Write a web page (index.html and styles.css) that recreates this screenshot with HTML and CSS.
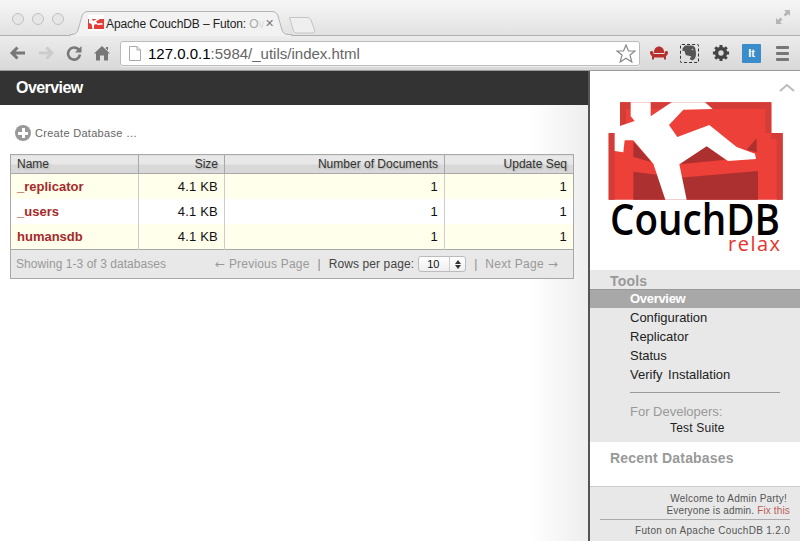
FILE: index.html
```html
<!DOCTYPE html>
<html lang="en">
<head>
<meta charset="utf-8">
<title>Apache CouchDB - Futon: Overview</title>
<link rel="stylesheet" href="styles.css">
</head>
<body>
<header class="chrome">
  <div class="tabbar">
    <div class="lights"><i></i><i></i><i></i></div>
    <div class="tab">
      <svg class="tab-shape" width="222" height="25" viewBox="0 0 222 25"><path d="M0 23.500H2C5 23.500 7 22 8 19L12 5C13 2 15 .5 18 .5H202C205 .5 207 2 208 5L212 19C213 22 215 23.500 218 23.500H222V25H0Z" fill="#f2f2f2" stroke="#b4b4b4"/><path d="M1 24.500H221" stroke="#f2f2f2"/></svg>
      <svg class="favicon" width="16" height="16" viewBox="0 0 16 16"><rect width="16" height="16" fill="#fff"/><path d="M0 4H16V14H0Z" fill="#e23d36"/><path d="M1 4H4L5 6L9 4H12L8 6.500L9.500 8.500L14 8L15 9.500L10 10L8 9L6 10V14H4.500L3.500 9L1 8Z" fill="#fff"/></svg>
      <span class="tab-title">Apache CouchDB – Futon: <span class="fade-a">O</span><span class="fade-b">v</span></span>
      <span class="tab-close">✕</span>
    </div>
    <svg class="newtab" width="28" height="18" viewBox="0 0 28 18"><path d="M1.500 1.500H19C21 1.500 22 2.500 23 4L26.500 14C27 16 26 17 24 17H9C7 17 6 16 5.500 15Z" fill="#efefef" stroke="#c4c4c4"/></svg>
    <svg class="fullscreen" width="16" height="16" viewBox="0 0 16 16"><path d="M9 1H15V7L13 5L10.500 7.500L8.500 5.500L11 3ZM1 15V9L3 11L5.500 8.500L7.500 10.500L5 13L7 15Z" fill="#b5b5b5"/></svg>
  </div>
  <div class="toolbar">
    <svg class="nav-ico" width="18" height="16" viewBox="0 0 18 16"><path d="M8.500 2.500L3 8L8.500 13.500M3.500 8H16" fill="none" stroke="#777" stroke-width="3"/></svg>
    <svg class="nav-ico" width="18" height="16" viewBox="0 0 18 16"><path d="M9.500 2.500L15 8L9.500 13.500M14.500 8H2" fill="none" stroke="#ccc" stroke-width="3"/></svg>
    <svg class="nav-ico" width="18" height="16" viewBox="0 0 18 16"><path d="M13.500 4.500A6 6 0 1 0 15 9.500" fill="none" stroke="#777" stroke-width="2.600"/><path d="M16.500 1V7.500H10Z" fill="#777"/></svg>
    <svg class="nav-ico" width="18" height="16" viewBox="0 0 18 16"><path d="M9 1L17 8.500H15V15.500H11V10.500H7V15.500H3V8.500H1Z" fill="#777"/><path d="M13 2H15V5.500L13 3.500Z" fill="#777"/></svg>
    <div class="omnibox">
      <svg class="page-ico" width="12" height="15" viewBox="0 0 12 15"><path d="M.5 .5H8L11.500 4V14.500H.5Z" fill="#fff" stroke="#aaa"/><path d="M8 .5V4H11.500" fill="none" stroke="#aaa"/></svg>
      <span class="url"><b>127.0.0.1</b>:5984/_utils/index.html</span>
      <svg class="star" width="20" height="19" viewBox="0 0 20 19"><path d="M10 1L12.500 7H19L14 11L15.800 18L10 14.200L4.200 18L6 11L1 7H7.500Z" fill="#fff" stroke="#888" stroke-width="1.200"/></svg>
    </div>
    <div class="exts">
      <svg class="sofa" width="18" height="14" viewBox="0 0 18 14"><path d="M4 6C4 2 7 .5 9 .5S14 2 14 6V7H4Z" fill="#b8302e"/><path d="M0 6.500C0 4.500 3 4.500 3.500 6.500V8H14.500V6.500C15 4.500 18 4.500 18 6.500C18 8.500 17 9.500 16 10V13.500H14V11.500H4V13.500H2V10C1 9.500 0 8.500 0 6.500Z" fill="#b8302e"/></svg>
      <span class="evernote"><svg width="15" height="16" viewBox="0 0 15 16"><path d="M3 .5H9C12 .5 13.500 2 13.500 5C14.500 9 14 14 11 15C9.500 15.500 8 15 8 13.500C8 12 9.500 12 10 12.500C9 11 6.500 10.500 4.500 10.500C3 9.500 3 7 2.500 6H0.500V3.500Z" fill="#555"/><circle cx="10.500" cy="4.500" r=".8" fill="#ccc"/></svg></span>
      <svg class="gear" width="18" height="18" viewBox="0 0 20 20"><circle cx="10" cy="10" r="5.200" fill="none" stroke="#444" stroke-width="3.400"/><path d="M10 1V19M1 10H19M3.600 3.600L16.400 16.400M16.400 3.600L3.600 16.400" stroke="#444" stroke-width="3.400"/><circle cx="10" cy="10" r="3" fill="#dcdcdc"/></svg>
      <span class="it-badge">It</span>
      <span class="hamburger"><i></i><i></i><i></i></span>
    </div>
  </div>
</header>
<div class="page">
  <main class="main">
    <h1 class="page-title">Overview</h1>
    <div class="content">
      <a class="create"><span class="plus"></span>Create Database …</a>
      <table class="dbs">
        <thead>
          <tr><th class="c-name">Name</th><th class="c-size">Size</th><th class="c-docs">Number of Documents</th><th class="c-seq">Update Seq</th></tr>
        </thead>
        <tbody>
          <tr class="odd"><td class="name">_replicator</td><td>4.1 KB</td><td>1</td><td>1</td></tr>
          <tr><td class="name">_users</td><td>4.1 KB</td><td>1</td><td>1</td></tr>
          <tr class="odd last"><td class="name">humansdb</td><td>4.1 KB</td><td>1</td><td>1</td></tr>
        </tbody>
        <tfoot>
          <tr><td colspan="4">
            <div class="pager">
              <span class="showing">Showing 1-3 of 3 databases</span>
              <span class="paging">
                <span class="muted prev"><span class="arrow">←</span> Previous Page</span>
                <span class="sep">|</span>
                <span class="rows">Rows per page:</span>
                <span class="select"><span class="select-val">10</span><span class="select-arrows"><i class="up"></i><i class="down"></i></span></span>
                <span class="sep sep-b">|</span>
                <span class="muted next">Next Page <span class="arrow">→</span></span>
              </span>
            </div>
          </td></tr>
        </tfoot>
      </table>
    </div>
  </main>
  <aside class="side">
    <div class="side-top">
      <svg class="collapse" width="16" height="9" viewBox="0 0 16 9"><path d="M1 8L8 2L15 8" fill="none" stroke="#bbb" stroke-width="2"/></svg>
      <svg class="logo" width="210" height="190" viewBox="0 0 630 570">
        <path d="M90 82H544V174H578V374H56V174H90Z" fill="#ec4038"/>
        <path d="M90 82H544V174H526V102H108V174H90ZM544 174H578V374H560V192H544ZM56 174H74V374H56Z" fill="#d43c38"/>
        <path d="M130 232V374H504V288L270 308L130 290Z" fill="#ad3030"/>
        <path d="M130 200L186 262L130 246ZM500 190V232L470 224Z M350 212L405 254L270 268Z" fill="#ad3030"/>
        <path d="M122 82H182V124L245 82H345L368 102L280 104L237 150L262 186L358 150L440 216L495 236L498 252L414 258L350 214L268 268L290 374H226L190 266L130 196L104 196L100 232L74 228V158L134 138L122 124Z" fill="#fff"/>
        <text class="logo-word" x="60" y="480" textLength="510" lengthAdjust="spacingAndGlyphs">CouchDB</text>
        <text class="logo-relax" x="414" y="527" textLength="156" lengthAdjust="spacing">relax</text>
      </svg>
    </div>
    <nav class="tools">
      <h3 class="side-h tools-h">Tools</h3>
      <ul class="menu">
        <li class="active">Overview</li>
        <li>Configuration</li>
        <li>Replicator</li>
        <li>Status</li>
        <li>Verify Installation</li>
      </ul>
      <hr class="rule">
      <div class="dev-h">For Developers:</div>
      <div class="dev-item">Test Suite</div>
    </nav>
    <section class="recent">
      <h3 class="side-h">Recent Databases</h3>
    </section>
    <footer class="side-foot">
      <div class="welcome"><span class="welcome-line">Welcome to Admin Party!</span>Everyone is admin. <a>Fix this</a></div>
      <div class="version">Futon on Apache CouchDB 1.2.0</div>
    </footer>
  </aside>
</div>
</body>
</html>
```
FILE: styles.css
```css
* { box-sizing: border-box; }
html, body { margin: 0; padding: 0; height: 541px; overflow: hidden; }
body { font-family: "Liberation Sans", Arial, sans-serif; background: #fff; color: #000; }

.chrome { height: 71px; display: flex; flex-direction: column; }
.tabbar { height: 36px; background: linear-gradient(#f6f6f6, #e2e2e2); border-bottom: 1px solid #b0b0b0; display: flex; align-items: flex-end; position: relative; }
.lights { display: flex; gap: 8px; padding-left: 12px; align-self: flex-start; padding-top: 13px; }
.lights i { width: 12px; height: 12px; border-radius: 50%; background: #e6e6e6; border: 1px solid #c0c0c0; }
.tab { width: 222px; height: 25px; margin-left: 6px; position: relative; display: flex; align-items: center; padding: 0 0 0 18px; margin-bottom: -1px; }
.tab-shape { position: absolute; left: 0; top: 0; }
.favicon { position: relative; flex: none; margin-top: -1px; }
.tab-title { position: relative; font-size: 12px; letter-spacing: -.12px; margin-left: 2px; white-space: nowrap; width: 157px; color: #222; }
.fade-a { color: #aaa; }
.fade-b { color: #ddd; }
.tab-close { position: relative; font-size: 11px; color: #777; margin-left: 2px; font-family: "DejaVu Sans", sans-serif; }
.newtab { margin-left: -4px; position: relative; top: -1px; }
.fullscreen { position: absolute; right: 9px; top: 9px; }

.toolbar { height: 35px; background: linear-gradient(#ececec, #d8d8d8); border-bottom: 1px solid #9a9a9a; display: flex; align-items: center; padding-left: 9px; gap: 10px; }
.nav-ico { flex: none; }
.omnibox { width: 520px; height: 25px; margin-left: -1px; background: #fff; border: 1px solid #bbb; border-radius: 3px; display: flex; align-items: center; padding-left: 8px; box-shadow: 0 1px 0 #eee; }
.page-ico { flex: none; }
.url { font-size: 15px; color: #666; margin-left: 7px; flex: 1; white-space: nowrap; }
.url b { font-weight: normal; color: #000; }
.star { flex: none; margin-right: 3px; }
.exts { display: flex; align-items: center; gap: 12px; }
.evernote { width: 19px; height: 19px; border: 1px dashed #333; border-radius: 2px; display: flex; align-items: center; justify-content: center; }
.gear { margin-left: 1px; }
.it-badge { width: 19px; height: 19px; background: #3a8ccb; color: #fff; border-radius: 1px; font-size: 11px; font-weight: bold; display: flex; align-items: center; justify-content: center; }
.hamburger { width: 13px; margin-left: 3px; display: flex; flex-direction: column; gap: 3px; }
.hamburger i { height: 3px; background: #777; border-radius: 1px; }

.page { height: 470px; display: flex; }
.main { width: 590px; flex: none; background: linear-gradient(90deg, #fff 530px, #eeeeee 588px); border-right: 2px solid #555; }
.page-title { margin: 0; height: 34px; background: #333; color: #fff; font-size: 16px; font-weight: bold; line-height: 33px; padding-left: 16px; letter-spacing: -.55px; }
.content { padding: 20px 0 0 10px; }
.create { display: flex; align-items: center; height: 16px; font-size: 11px; letter-spacing: .3px; color: #666; margin-left: 5px; gap: 4px; }
.plus { width: 16px; height: 16px; border-radius: 50%; background: linear-gradient(#fff, #fff) center/3px 10px no-repeat, linear-gradient(#fff, #fff) center/10px 3px no-repeat, #999; }

.dbs { width: 563px; margin-top: 13px; border-collapse: collapse; table-layout: fixed; font-size: 13px; border: 1px solid #a8a8a8; }
.dbs th { height: 19px; padding: 0 6px; font-size: 12px; font-weight: normal; text-align: right; color: #333; border-left: 1px solid #a8a8a8; border-bottom: 1px solid #a8a8a8; background: linear-gradient(#e8e8e8 50%, #d8d8d8 50%); text-shadow: 1px 1px 2px #aaa; }
.dbs th:first-child { border-left: 0; text-align: left; }
.c-name { width: 128px; } .c-size { width: 86px; } .c-docs { width: 220px; } .c-seq { width: 129px; }
.dbs td { height: 25px; padding: 0 6px; text-align: right; letter-spacing: .2px; border-left: 1px solid #ccc; color: #111; background: #fff; }
.dbs .last td { height: 26px; }
.dbs tbody td:first-child { border-left: 0; text-align: left; }
.dbs .odd td { background: #ffffec; }
.dbs td.name { font-weight: bold; color: #a52a2a; letter-spacing: 0; }
.dbs tfoot td { height: 29px; background: #e8e8e8; border-top: 1px solid #a8a8a8; border-left: 0; padding: 0 15px 0 5px; font-size: 12px; letter-spacing: 0; color: #999; text-align: left; }
.pager { display: flex; justify-content: space-between; align-items: center; }
.showing { letter-spacing: .05px; }
.paging { display: flex; align-items: center; }
.muted { color: #999; }
.arrow { font-family: "DejaVu Sans", sans-serif; }
.prev { letter-spacing: .2px; }
.next { letter-spacing: .3px; }
.sep { color: #888; margin: 0 8px; }
.sep-b { margin: 0 8px; }
.rows { color: #444; margin-right: 4px; letter-spacing: .1px; }
.select { width: 48px; height: 16px; background: linear-gradient(#fff, #eee); border: 1px solid #bbb; border-radius: 3px; display: flex; color: #111; font-size: 11px; }
.select-val { flex: 1; padding-left: 8px; line-height: 14px; }
.select-arrows { width: 16px; border-left: 1px solid #ccc; display: flex; flex-direction: column; align-items: center; justify-content: center; gap: 1px; }
.select-arrows i { width: 0; height: 0; border-left: 3px solid transparent; border-right: 3px solid transparent; }
.select-arrows .up { border-bottom: 4px solid #333; }
.select-arrows .down { border-top: 4px solid #333; }

.side { width: 210px; flex: none; display: flex; flex-direction: column; background: #fff; }
.side-top { height: 199px; position: relative; }
.collapse { position: absolute; right: 5px; top: 12px; }
.logo { position: absolute; left: 0; top: 4px; }
.logo-word { font-family: "Open Sans", sans-serif; font-weight: 600; font-size: 128px; fill: #000; }
.logo-relax { font-family: "Open Sans", sans-serif; font-size: 60px; fill: #e8332c; }

.tools { height: 172px; background: #e8e8e8; display: flex; flex-direction: column; }
.side-h { margin: 0; font-size: 14px; font-weight: bold; color: #999; padding-left: 20px; letter-spacing: .2px; }
.tools-h { height: 19px; line-height: 22px; }
.menu { list-style: none; margin: 0; padding: 0; font-size: 13px; color: #222; word-spacing: 2px; }
.menu li { height: 19px; line-height: 19px; padding-left: 40px; }
.menu .active { background: #a8a8a8; color: #fff; font-weight: bold; letter-spacing: -.3px; line-height: 18px; border-top: 1px solid #999; }
.rule { margin: 8px 20px 0 40px; border: 0; border-top: 1px solid #999; height: 0; }
.dev-h { font-size: 13px; color: #999; padding-left: 40px; margin-top: 11px; line-height: 16px; }
.dev-item { font-size: 12px; letter-spacing: .2px; color: #222; padding-left: 80px; line-height: 16px; }
.recent { height: 44px; padding-top: 8px; }
.recent .side-h { line-height: 17px; }
.side-foot { flex: 1; background: #e8e8e8; border-top: 1px solid #ccc; padding: 6px 10px 0; text-align: right; font-size: 10px; letter-spacing: .15px; color: #555; }
.welcome { line-height: 12px; padding-bottom: 2px; border-bottom: 1px solid #aaa; }
.welcome-line { display: block; padding-right: 3px; letter-spacing: .2px; }
.welcome a { color: #b85c5c; }
.version { line-height: 12px; margin-top: 5px; letter-spacing: .3px; }
```
